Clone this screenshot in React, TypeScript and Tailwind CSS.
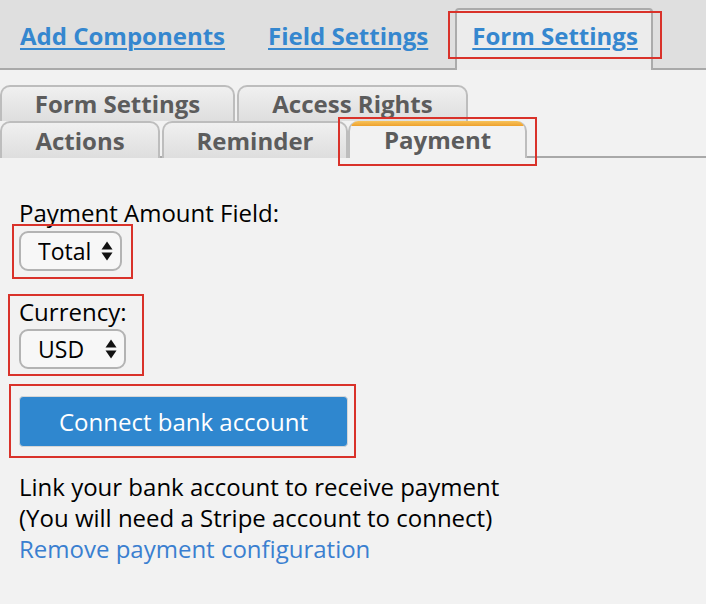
import React from "react";

const subTab =
  "h-[36px] flex items-center justify-center border-2 border-b-0 border-[#bdbdbd] rounded-t-[10px] bg-gradient-to-b from-[#f0f0f0] to-[#dedede] text-[24px] font-bold text-[#5c5c5c] leading-none";

const topLink = "text-[24px] font-bold text-[#3587cf] underline decoration-2 underline-offset-[3px] leading-none";

function Arrows() {
  return (
    <svg width="12" height="20" viewBox="0 0 12 20" className="pointer-events-none absolute right-[9px] top-1/2 -translate-y-1/2">
      <path d="M6 0.5 L11.5 8.5 H0.5 Z" fill="#111" />
      <path d="M6 19.5 L11.5 11.5 H0.5 Z" fill="#111" />
    </svg>
  );
}

function Select({ value, width }: { value: string; width: string }) {
  return (
    <div className={`relative ${width}`}>
      <select
        defaultValue={value}
        className="appearance-none w-full h-[40px] rounded-[9px] border-2 border-[#b3b3b3] bg-[#f7f7f7] pl-[17px] text-[23px] text-black leading-none outline-none"
      >
        <option>{value}</option>
      </select>
      <Arrows />
    </div>
  );
}

export default function App() {
  return (
    <div className="relative w-[706px] h-[604px] bg-[#f2f2f2] overflow-hidden font-['Open_Sans',sans-serif]">
      {/* top tab bar */}
      <div className="h-[70px] bg-[#dfdfdf] border-b-2 border-[#a9a9a9] flex items-end pl-[20px]">
        <a href="#" className={`${topLink} mb-[20px]`}>
          Add Components
        </a>
        <a href="#" className={`${topLink} ml-[43px] mb-[20px]`}>
          Field Settings
        </a>
        <div className="ml-[27px] -mb-[2px] w-[198px] h-[62px] bg-[#ececec] border-2 border-b-0 border-[#ababab] rounded-t-[4px] flex items-end pl-[15px] pb-[22px]">
          <a href="#" className={topLink}>
            Form Settings
          </a>
        </div>
      </div>

      {/* sub tabs */}
      <div className="mt-[15px]">
        <div className="flex gap-[2px]">
          <div className={`${subTab} w-[235px]`}>Form Settings</div>
          <div className={`${subTab} w-[231px]`}>Access Rights</div>
        </div>
        <div className="flex items-end border-b-2 border-[#a9a9a9]">
          <div className={`${subTab} w-[160px] -mb-[2px] h-[37px]`}>Actions</div>
          <div className={`${subTab} w-[186px] ml-[2px] -mb-[2px] h-[37px]`}>Reminder</div>
          <div className="-mb-[2px] h-[37px] w-[179px] flex items-center justify-center border-2 border-y-0 border-[#bdbdbd] rounded-t-[10px] bg-[#f2f2f2] text-[24px] font-bold text-[#5c5c5c] leading-none relative overflow-hidden">
            <div className="absolute left-0 right-0 top-0 h-[5px] bg-gradient-to-b from-[#f7c35a] to-[#eea12a] rounded-t-[8px]" />
            Payment
          </div>
        </div>
      </div>

      {/* content */}
      <div className="pl-[19px] pt-[41px] text-black">
        <div className="text-[24px] leading-[28px]">Payment Amount Field:</div>
        <div className="mt-[4px]">
          <Select value="Total" width="w-[103px]" />
        </div>
        <div className="mt-[27px] text-[24px] leading-[28px]">Currency:</div>
        <div className="mt-[3px]">
          <Select value="USD" width="w-[107px]" />
        </div>
        <button className="mt-[27px] w-[329px] h-[51px] rounded-[4px] bg-[#2f87cf] text-white text-[24px] border border-[#d6d6d6]">
          Connect bank account
        </button>
        <div className="mt-[24px] text-[24px] leading-[31px]">
          <div>Link your bank account to receive payment</div>
          <div>(You will need a Stripe account to connect)</div>
          <a href="#" className="text-[#3a7fd0]">Remove payment configuration</a>
        </div>
      </div>

      {/* red annotation boxes */}
      <div className="pointer-events-none absolute left-[448px] top-[11px] w-[214px] h-[48px] border-2 border-[#d9322a]" />
      <div className="pointer-events-none absolute left-[338px] top-[117px] w-[199px] h-[49px] border-2 border-[#d9322a]" />
      <div className="pointer-events-none absolute left-[12px] top-[224px] w-[121px] h-[55px] border-2 border-[#d9322a]" />
      <div className="pointer-events-none absolute left-[8px] top-[294px] w-[136px] h-[82px] border-2 border-[#d9322a]" />
      <div className="pointer-events-none absolute left-[9px] top-[384px] w-[347px] h-[74px] border-2 border-[#d9322a]" />
    </div>
  );
}
